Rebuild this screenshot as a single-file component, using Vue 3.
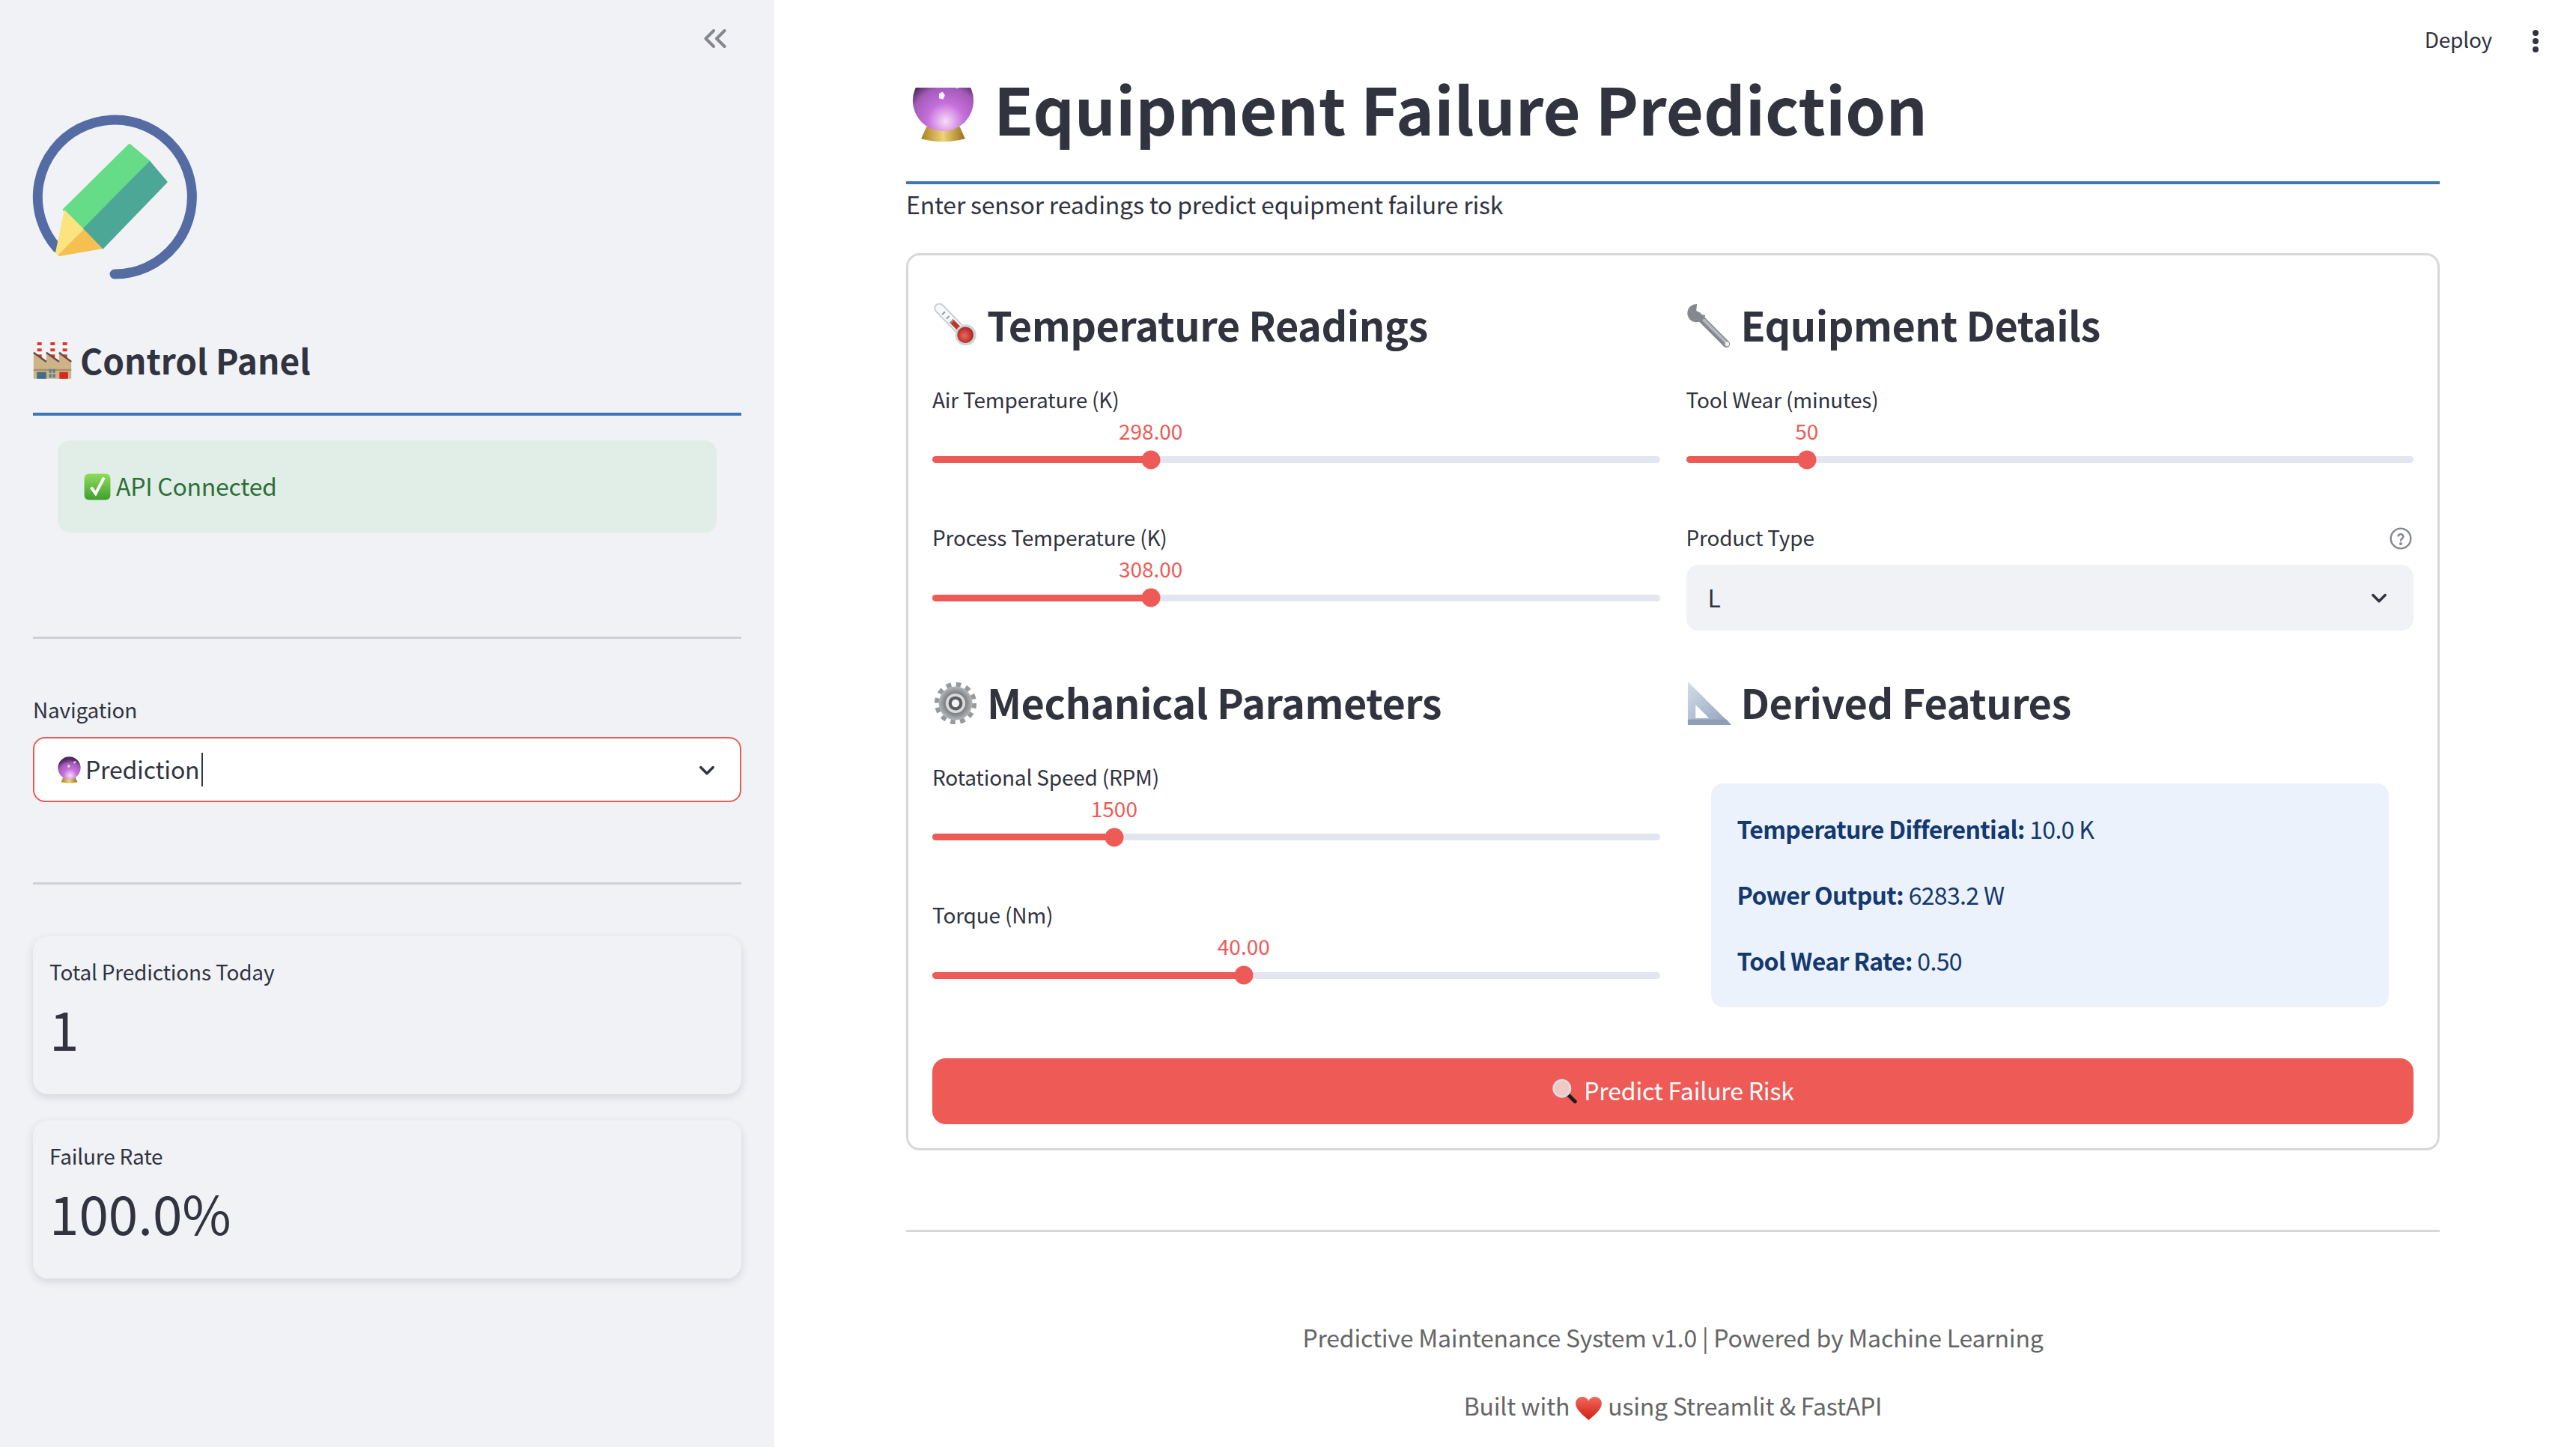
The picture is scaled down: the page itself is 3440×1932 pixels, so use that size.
<template>
  <div class="app">
    <!-- shared emoji drawings -->
    <svg class="defs" width="0" height="0">
      <defs>
        <radialGradient id="ballFill" cx="54%" cy="84%" r="72%">
          <stop offset="0" stop-color="#f7dcf9" />
          <stop offset="0.42" stop-color="#c56fdb" />
          <stop offset="0.78" stop-color="#a45ab8" />
          <stop offset="1" stop-color="#4e2c62" />
        </radialGradient>
        <linearGradient id="goldFill" x1="0" y1="0" x2="1" y2="0">
          <stop offset="0" stop-color="#a8801f" />
          <stop offset="0.5" stop-color="#efd27a" />
          <stop offset="1" stop-color="#98701a" />
        </linearGradient>
        <linearGradient id="checkFill" x1="0" y1="0" x2="0" y2="1">
          <stop offset="0" stop-color="#8fdc5c" />
          <stop offset="1" stop-color="#3f9f2c" />
        </linearGradient>
        <radialGradient id="bulbFill" cx="45%" cy="55%" r="60%">
          <stop offset="0" stop-color="#ec6a5d" />
          <stop offset="1" stop-color="#a81f1a" />
        </radialGradient>
        <linearGradient id="squareFill" x1="0" y1="0" x2="1" y2="1">
          <stop offset="0" stop-color="#d3deeb" />
          <stop offset="1" stop-color="#8e9fb7" />
        </linearGradient>
        <linearGradient id="heartFill" x1="0" y1="0" x2="0" y2="1">
          <stop offset="0" stop-color="#f2685a" />
          <stop offset="1" stop-color="#cf1f14" />
        </linearGradient>
        <radialGradient id="gearFill" cx="50%" cy="50%" r="50%">
          <stop offset="0.3" stop-color="#55565a" />
          <stop offset="1" stop-color="#b4b7bb" />
        </radialGradient>

        <g id="ball">
          <path d="M18 48 H46 L50.5 58 Q32 63 13.5 58 Z" fill="url(#goldFill)" />
          <circle cx="32" cy="26" r="25.6" fill="url(#ballFill)" />
          <path d="M28.5 20 l3 -1.5 2 3 -1.5 3.5 -3.5 -1 z" fill="#fff" opacity="0.9" />
          <path d="M40 14 l5 -4 4 2 -5 4 z" fill="#f6d6f8" opacity="0.85" />
        </g>

        <g id="factory">
          <g fill="#fff">
            <rect x="7" y="0" width="7.4" height="28" />
            <rect x="28.7" y="0" width="7.4" height="28" />
            <rect x="48.8" y="0" width="7.4" height="28" />
          </g>
          <path d="M7 0h7.4v5H7zM7 10h7.4v5H7zM7 20h7.4v5H7zM28.7 0h7.4v5h-7.4zM28.7 10h7.4v5h-7.4zM28.7 20h7.4v5h-7.4zM48.8 0h7.4v5h-7.4zM48.8 10h7.4v5h-7.4zM48.8 20h7.4v5h-7.4z" fill="#d8372b" />
          <path d="M1 17 L22 32 V17 L43 32 V17 L63 32 V60 H1 Z" fill="#cdb488" />
          <path d="M1 17 L22 32 M22 17 L43 32 M43 17 L63 32" stroke="#6a4a3c" stroke-width="3" fill="none" />
          <rect x="1" y="44" width="62" height="3" fill="#a68f68" />
          <rect x="6.5" y="49" width="15.5" height="11" fill="#3f6d87" />
          <path d="M26.5 44h4.2v6h-4.2zM32.5 44h4.2v6h-4.2zM26.5 52h4.2v6h-4.2zM32.5 52h4.2v6h-4.2z" fill="#5f7f95" />
          <rect x="43.5" y="49" width="14.2" height="11" fill="#d5291f" />
        </g>

        <g id="check">
          <rect x="1" y="1" width="62" height="62" rx="11" fill="url(#checkFill)" />
          <path d="M17 33 L28 48 L48 10" fill="none" stroke="#fff" stroke-width="7" />
        </g>

        <g id="thermo">
          <line x1="9" y1="7" x2="44" y2="43" stroke="#c3cfd6" stroke-width="15" stroke-linecap="round" />
          <line x1="9" y1="7" x2="44" y2="43" stroke="#f6f8f9" stroke-width="11" stroke-linecap="round" />
          <line x1="26" y1="25" x2="44" y2="43" stroke="#c0342b" stroke-width="7" />
          <path d="M13 16l4-4M19 22l4-4M25 28l4-4" stroke="#8e979e" stroke-width="2" />
          <circle cx="46.5" cy="45" r="15" fill="#c9d6dc" />
          <circle cx="46" cy="45" r="11.5" fill="url(#bulbFill)" />
        </g>

        <g id="wrench">
          <line x1="15" y1="17" x2="56" y2="58" stroke="#85888e" stroke-width="10" stroke-linecap="round" />
          <line x1="15" y1="15" x2="56" y2="56" stroke="#b5b8bc" stroke-width="4" stroke-linecap="round" />
          <path d="M14 1 A13 13 0 1 0 26 17 L19 16 L13 10 L14 1 Z" fill="#85888e" />
          <circle cx="57" cy="58" r="3" fill="#eceded" />
        </g>

        <g id="gear">
          <circle cx="32" cy="32" r="26.5" fill="none" stroke="#96999e" stroke-width="7" stroke-dasharray="7 6.87" />
          <circle cx="32" cy="32" r="24" fill="url(#gearFill)" />
          <circle cx="32" cy="32" r="14" fill="#d8dadc" />
          <circle cx="32" cy="32" r="10" fill="#5b5c61" />
          <circle cx="32" cy="32" r="5.5" fill="#f2f3f4" />
        </g>

        <g id="setsquare">
          <path fill-rule="evenodd" d="M1 1 L63 63 H1 Z M12 34 V53 H31 Z" fill="url(#squareFill)" />
          <path d="M1 63 H63 L56 55 H1 Z" fill="#8e9fb7" />
        </g>

        <g id="lens">
          <line x1="38" y1="38" x2="58" y2="58" stroke="#1d1d1f" stroke-width="9" stroke-linecap="round" />
          <circle cx="25" cy="25" r="21" fill="#f0c9c5" stroke="#dadde0" stroke-width="5" />
        </g>

        <g id="heart">
          <path d="M32 62 C12 44 2 32 2 19 C2 8 10 2 18 2 C24 2 29 6 32 12 C35 6 40 2 46 2 C54 2 62 8 62 19 C62 32 52 44 32 62 Z" fill="url(#heartFill)" />
        </g>
      </defs>
    </svg>

    <aside class="side">
      <div class="collapse">
        <svg width="30" height="25" viewBox="0 0 30 25" fill="none" stroke="#85878e" stroke-width="4" stroke-linecap="round" stroke-linejoin="round">
          <path d="M13 2 L2.5 12.5 L13 23 M27.5 2 L17 12.5 L27.5 23" />
        </svg>
      </div>

      <svg class="logo" width="220" height="220" viewBox="0 0 220 220">
        <path d="M110 213 A103 103 0 1 0 33 178" fill="none" stroke="#546ba4" stroke-width="13" stroke-linecap="round" />
        <path d="M43 127 L130 41 L157 64 L69 153 Z" fill="#66db88" stroke="#66db88" stroke-width="4" stroke-linejoin="round" />
        <path d="M157 64 L179 90 L94 178 L69 153 Z" fill="#4ca796" stroke="#4ca796" stroke-width="3" stroke-linejoin="round" />
        <path d="M43 127 L69 153 L34 188 L31 184 Z" fill="#fde37f" />
        <path d="M69 153 L94 179 L37 189 L34 188 Z" fill="#f5c04f" />
      </svg>

      <h2 class="side-title">
        <svg width="52" height="52" viewBox="0 0 64 64"><use href="#factory" /></svg>
        <span>Control Panel</span>
      </h2>

      <div class="alert">
        <svg width="36" height="36" viewBox="0 0 64 64"><use href="#check" /></svg>
        <span>API Connected</span>
      </div>

      <hr class="side-rule first" />

      <div class="nav-label">Navigation</div>
      <div class="nav-select">
        <svg width="31" height="36" viewBox="6 0 52 61"><use href="#ball" /></svg>
        <span>Prediction</span>
        <i class="caret"></i>
        <svg class="chevron" width="28" height="28" viewBox="0 0 24 24" fill="none" stroke="#31333f" stroke-width="3" stroke-linecap="round" stroke-linejoin="round">
          <path d="M5 9 L12 16 L19 9" />
        </svg>
      </div>

      <hr class="side-rule second" />

      <div v-for="m in metrics" :key="m.label" class="metric">
        <div class="metric-label">{{ m.label }}</div>
        <div class="metric-value">{{ m.value }}</div>
      </div>
    </aside>

    <main class="main">
      <div class="topbar">
        <span>Deploy</span>
        <svg width="10" height="32" viewBox="0 0 10 32" fill="#31333f">
          <circle cx="5" cy="5" r="4" /><circle cx="5" cy="16" r="4" /><circle cx="5" cy="27" r="4" />
        </svg>
      </div>

      <h1 class="title">
        <svg width="83" height="73" viewBox="6 15 52 46"><use href="#ball" /></svg>
        <span>Equipment Failure Prediction</span>
      </h1>
      <p class="subtitle">Enter sensor readings to predict equipment failure risk</p>

      <section class="card">
        <div class="grid">
          <div v-for="s in sections" :key="s.title" class="col">
            <h3 class="head">
              <svg width="62" height="60" viewBox="0 0 64 64"><use :href="'#' + s.icon" /></svg>
              <span>{{ s.title }}</span>
            </h3>

            <div v-if="s.info" class="info">
              <p v-for="row in s.info" :key="row.name"><b>{{ row.name }}:</b> {{ row.value }}</p>
            </div>

            <div v-for="f in s.fields" :key="f.label" class="field">
              <div class="label">
                <span>{{ f.label }}</span>
                <svg v-if="f.options" width="32" height="32" viewBox="0 0 24 24" fill="none" stroke="#85878e" stroke-width="1.8" stroke-linecap="round">
                  <circle cx="12" cy="12" r="10" />
                  <path d="M9.4 9.4a2.7 2.7 0 0 1 5.2 .8c0 1.8 -2.6 2.2 -2.6 3.8" />
                  <circle cx="12" cy="17.2" r="0.6" fill="#85878e" />
                </svg>
              </div>

              <div v-if="f.options" class="select">
                <span>{{ f.options[0] }}</span>
                <svg width="28" height="28" viewBox="0 0 24 24" fill="none" stroke="#31333f" stroke-width="3" stroke-linecap="round" stroke-linejoin="round">
                  <path d="M5 9 L12 16 L19 9" />
                </svg>
              </div>

              <div v-else class="slider">
                <div class="value-line">
                  <span class="value" :style="{ left: f.pos + '%' }">{{ f.value }}</span>
                </div>
                <div class="track">
                  <div class="fill" :style="{ width: f.pos + '%' }"></div>
                  <div class="thumb" :style="{ left: f.pos + '%' }"></div>
                </div>
              </div>
            </div>
          </div>
        </div>

        <button class="predict">
          <svg width="35" height="34" viewBox="0 0 64 64"><use href="#lens" /></svg>
          <span>Predict Failure Risk</span>
        </button>
      </section>

      <hr class="main-rule" />

      <footer class="foot">
        <p>Predictive Maintenance System v1.0 | Powered by Machine Learning</p>
        <p>
          Built with
          <svg width="37" height="33" viewBox="0 0 64 64" preserveAspectRatio="none"><use href="#heart" /></svg>
          using Streamlit &amp; FastAPI
        </p>
      </footer>
    </main>
  </div>
</template>

<script setup>
const metrics = [
  { label: 'Total Predictions Today', value: '1' },
  { label: 'Failure Rate', value: '100.0%' }
]

// pos = thumb position along the track, in percent
const sections = [
  {
    title: 'Temperature Readings',
    icon: 'thermo',
    fields: [
      { label: 'Air Temperature (K)', value: '298.00', pos: 30.02 },
      { label: 'Process Temperature (K)', value: '308.00', pos: 30.02 }
    ]
  },
  {
    title: 'Equipment Details',
    icon: 'wrench',
    fields: [
      { label: 'Tool Wear (minutes)', value: '50', pos: 16.6 },
      { label: 'Product Type', options: ['L', 'M', 'H'] }
    ]
  },
  {
    title: 'Mechanical Parameters',
    icon: 'gear',
    fields: [
      { label: 'Rotational Speed (RPM)', value: '1500', pos: 25 },
      { label: 'Torque (Nm)', value: '40.00', pos: 42.8 }
    ]
  },
  {
    title: 'Derived Features',
    icon: 'setsquare',
    info: [
      { name: 'Temperature Differential', value: '10.0 K' },
      { name: 'Power Output', value: '6283.2 W' },
      { name: 'Tool Wear Rate', value: '0.50' }
    ]
  }
]
</script>

<style>
body {
  margin: 0;
  background: #fff;
}
</style>

<style scoped>
.app {
  display: flex;
  height: 1932px;
  overflow: hidden;
  font-family: "Noto Sans CJK SC", "Noto Sans", sans-serif;
  color: #31333f;
}

.defs {
  position: absolute;
}

/* sidebar */
.side {
  width: 1034px;
  flex: none;
  box-sizing: border-box;
  padding: 0 44px;
  background: #f0f2f6;
}

.collapse {
  display: flex;
  justify-content: flex-end;
  padding: 39px 20px 0 0;
  height: 25px;
}

.logo {
  display: block;
  margin: 89px 0 0 -1px;
}

.side-title {
  display: flex;
  align-items: center;
  gap: 11px;
  margin: 80px 0 0;
  padding-bottom: 38px;
  height: 60px;
  border-bottom: 4px solid #3d76b5;
  font-size: 46px;
  line-height: 60px;
  font-weight: 600;
}
.side-title span {
  padding-bottom: 6px;
}

.alert {
  display: flex;
  align-items: center;
  gap: 7px;
  height: 123px;
  margin: 33px 33px 0;
  padding: 0 35px;
  border-radius: 16px;
  background: #e1eee7;
  color: #2e6f38;
  font-size: 32px;
  letter-spacing: -0.25px;
}
.alert span {
  padding-bottom: 4px;
}

.side-rule {
  margin: 0;
  border: 0;
  border-top: 3px solid #cfd0d5;
}
.side-rule.first {
  margin-top: 139px;
}
.side-rule.second {
  margin-top: 107px;
}

.nav-label {
  margin-top: 74px;
  line-height: 40px;
  font-size: 28px;
  letter-spacing: -0.2px;
}

.nav-select {
  display: flex;
  align-items: center;
  gap: 6px;
  box-sizing: border-box;
  height: 87px;
  margin-top: 17px;
  padding: 0 30px 0 31px;
  border: 2.5px solid #ee5a55;
  border-radius: 16px;
  background: #fff;
  font-size: 32px;
  letter-spacing: -0.2px;
}
.nav-select span {
  padding-bottom: 3px;
}

.caret {
  width: 2px;
  height: 45px;
  margin-left: -3px;
  background: #31333f;
}

.chevron {
  margin-left: auto;
}

.metric {
  box-sizing: border-box;
  height: 211px;
  margin-top: 35px;
  padding: 27px 22px 0;
  border-radius: 20px;
  background: #f0f2f6;
  box-shadow: 0 4px 12px rgba(40, 45, 60, 0.14);
}
.side-rule.second + .metric {
  margin-top: 69px;
}

.metric-label {
  line-height: 40px;
  font-size: 28px;
  letter-spacing: -0.2px;
}

.metric-value {
  margin-top: 15px;
  line-height: 80px;
  font-size: 71px;
}

/* main column */
.main {
  flex: 1;
  min-width: 0;
  position: relative;
  box-sizing: border-box;
  padding: 97px 182px 0 176px;
}

.topbar {
  position: absolute;
  top: 36px;
  right: 49px;
  display: flex;
  align-items: center;
  gap: 53px;
  font-size: 28px;
  line-height: 32px;
  letter-spacing: -0.2px;
}
.topbar span {
  padding-bottom: 6px;
}

.title {
  display: flex;
  align-items: center;
  gap: 26px;
  height: 100px;
  margin: 0;
  padding: 0 0 45px 8px;
  border-bottom: 4px solid #3d76b5;
  font-size: 86.5px;
  line-height: 100px;
  font-weight: 700;
}
.title span {
  padding-bottom: 6px;
}
.title svg {
  margin-top: 13px;
}

.subtitle {
  margin: 4px 0 0;
  line-height: 44px;
  font-size: 32px;
  letter-spacing: -0.2px;
}

.card {
  box-sizing: border-box;
  margin-top: 44px;
  padding: 59px 32px 32px;
  border: 3px solid #d8d8d8;
  border-radius: 18px;
}

.grid {
  display: grid;
  grid-template-columns: 1fr 1fr;
  column-gap: 35px;
  row-gap: 20.5px;
}

.head {
  display: flex;
  align-items: center;
  gap: 11px;
  height: 70px;
  margin: 0 0 44.5px;
  font-size: 54px;
  line-height: 70px;
  font-weight: 600;
  letter-spacing: -0.5px;
}
.head span {
  padding-bottom: 4px;
}

.field {
  height: 184.5px;
}

.label {
  display: flex;
  align-items: center;
  justify-content: space-between;
  height: 40px;
  padding-right: 1px;
  font-size: 28px;
  letter-spacing: -0.2px;
}
.label span {
  padding-bottom: 4px;
}

.value-line {
  position: relative;
  height: 36px;
  margin-top: 2px;
}

.value {
  position: absolute;
  top: 0;
  transform: translateX(-50%);
  line-height: 36px;
  font-size: 28px;
  color: #ee5a55;
}

.track {
  position: relative;
  height: 9px;
  margin-top: 16.5px;
  border-radius: 5px;
  background: #e3e6ee;
}

.fill {
  height: 100%;
  border-radius: 5px;
  background: #ee5a55;
}

.thumb {
  position: absolute;
  top: 50%;
  width: 25px;
  height: 25px;
  border-radius: 50%;
  background: #ee5a55;
  transform: translate(-50%, -50%);
}

.select {
  display: flex;
  align-items: center;
  justify-content: space-between;
  box-sizing: border-box;
  height: 88px;
  margin-top: 15px;
  padding: 0 32px 0 29px;
  border-radius: 16px;
  background: #f0f2f6;
  font-size: 32px;
}
.select span {
  padding-bottom: 3px;
}

.info {
  box-sizing: border-box;
  height: 299px;
  margin: 72px 33px 0;
  padding: 38px 35px 0;
  border-radius: 16px;
  background: #ebf2fc;
  color: #14396f;
  font-size: 32px;
  letter-spacing: -0.65px;
}
.info p {
  margin: 0 0 44px;
  line-height: 44px;
}
.info b {
  font-weight: 600;
}

.predict {
  display: flex;
  align-items: center;
  justify-content: center;
  gap: 8px;
  width: 100%;
  height: 88px;
  margin-top: 25px;
  border: 0;
  border-radius: 18px;
  background: #ee5a55;
  color: #fff;
  font-family: inherit;
  font-size: 32px;
  letter-spacing: -0.2px;
}
.predict span {
  padding-bottom: 3px;
}

.main-rule {
  margin: 106px 0 0;
  border: 0;
  border-top: 3px solid #d8d8d8;
}

.foot {
  margin-top: 118px;
  text-align: center;
  color: #666;
  font-size: 32px;
  letter-spacing: -0.2px;
}
.foot p {
  margin: 0 0 47px;
  line-height: 44px;
}
.foot svg {
  vertical-align: -7px;
}
</style>
